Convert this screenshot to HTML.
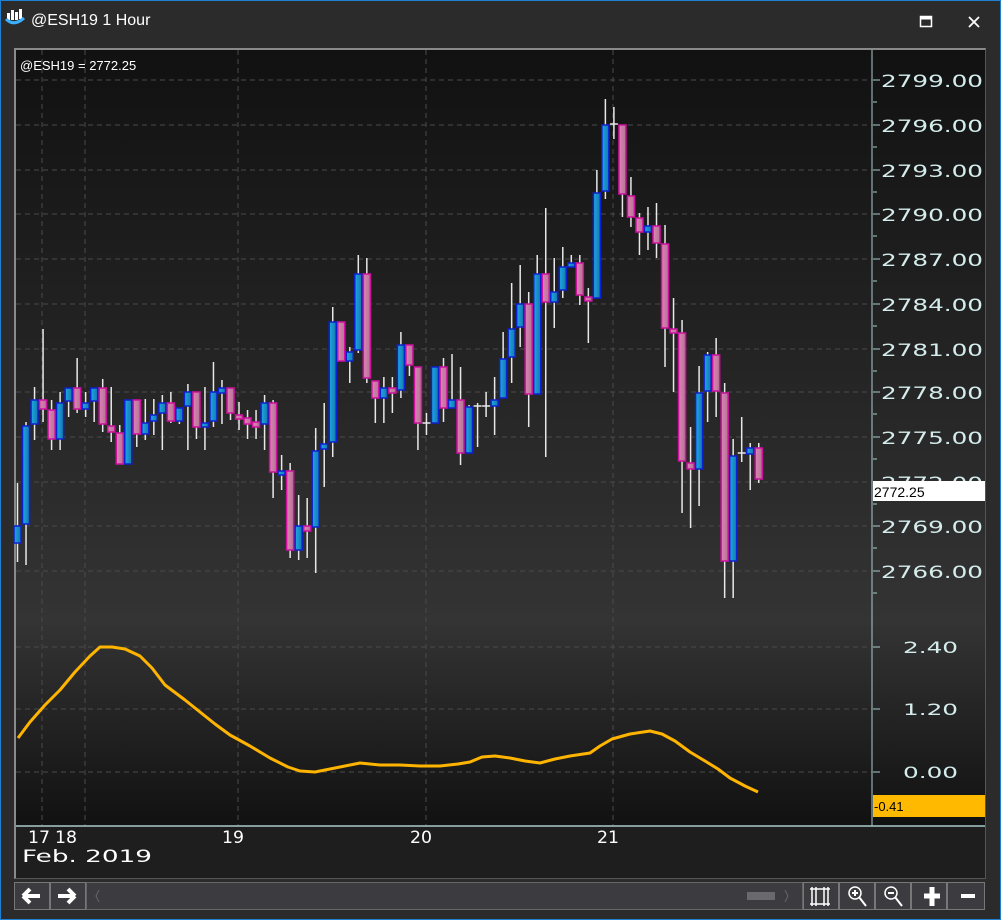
<!DOCTYPE html>
<html><head><meta charset="utf-8"><style>
*{margin:0;padding:0;box-sizing:border-box}
body{width:1001px;height:920px;background:#2b2b2b;overflow:hidden;font-family:"Liberation Sans",sans-serif;position:relative}
.win{position:absolute;left:0;top:0;width:1001px;height:920px;border:1px solid #1f7fd2;background:#2b2b2b}
.title{position:absolute;left:30px;top:11px;color:#fff;font-size:16px}
.chart{position:absolute;left:14px;top:48px;width:972px;height:831px;border:2px solid #8a8a8a;border-right:1px solid #555;border-bottom:1px solid #555}
.sb{position:absolute;top:882px;height:28px;background:#3c3c40;border:1px solid #666}
.btn{position:absolute;top:882px;height:28px;width:36px;background:#3c3c40;border:1px solid #777}
</style></head><body>
<div class="win">
<svg style="position:absolute;left:4px;top:6px" width="22" height="20" viewBox="0 0 22 20">
<rect x="2" y="6" width="3" height="7" fill="#fff"/><rect x="6" y="3" width="3" height="10" fill="#fff"/><rect x="10" y="5" width="3" height="8" fill="#fff"/><rect x="14" y="2" width="3" height="10" fill="#fff"/>
<path d="M1 12 Q9 20 19 11" stroke="#3ab0ff" stroke-width="3" fill="none"/></svg>
<div class="title">@ESH19 1 Hour</div>
<svg style="position:absolute;left:918px;top:14px" width="14" height="14"><rect x="1.5" y="1.5" width="11" height="10" fill="none" stroke="#fff" stroke-width="1.5"/><rect x="1.5" y="1.5" width="11" height="3" fill="#fff"/></svg>
<svg style="position:absolute;left:966px;top:14px" width="14" height="14"><path d="M2 2L12 12M12 2L2 12" stroke="#fff" stroke-width="1.8"/></svg>
</div>
<div class="chart"></div>
<svg id="c" style="position:absolute;left:0;top:0" width="1001" height="920"></svg>
<div class="btn" style="left:14px"></div><div class="btn" style="left:50px"></div>
<div class="sb" style="left:86px;width:717px"></div>
<div class="btn" style="left:803px"></div><div class="btn" style="left:839px"></div><div class="btn" style="left:875px"></div><div class="btn" style="left:911px"></div><div class="btn" style="left:947px;width:38px"></div>
<svg style="position:absolute;left:0;top:882px" width="1001" height="28">
<path d="M23 14H40M23 14L30 7M23 14L30 21" stroke="#fff" stroke-width="4" fill="none"/>
<path d="M58 14H75M75 14L68 7M75 14L68 21" stroke="#fff" stroke-width="4" fill="none"/>
<path d="M99 8L96 14L99 20" stroke="#666" fill="none"/>
<rect x="747" y="10" width="28" height="8" fill="#6a6a6e"/>
<path d="M785 8L788 14L785 20" stroke="#666" fill="none"/>
<path d="M812 5V24M816 5V24M824 5V24M828 5V24M810 7H830M810 22H830" stroke="#fff" stroke-width="1.5"/>
<circle cx="855" cy="11" r="6" stroke="#fff" stroke-width="1.5" fill="none"/><path d="M852 11H858M855 8V14M859 15L866 24" stroke="#fff" stroke-width="2"/>
<circle cx="891" cy="11" r="6" stroke="#fff" stroke-width="1.5" fill="none"/><path d="M888 11H894M895 15L902 24" stroke="#fff" stroke-width="2"/>
<path d="M924 14H940M932 5V24" stroke="#fff" stroke-width="5"/>
<path d="M961 14H975" stroke="#fff" stroke-width="4"/>
</svg>
<script>
var s=[];
s.push('<defs><linearGradient id="g1" x1="0" y1="0" x2="0" y2="1"><stop offset="0" stop-color="#111"/><stop offset="1" stop-color="#343434"/></linearGradient><linearGradient id="g2" x1="0" y1="0" x2="0" y2="1"><stop offset="0" stop-color="#333"/><stop offset="1" stop-color="#111"/></linearGradient><linearGradient id="bb" x1="0" x2="1"><stop offset="0" stop-color="#1aa8e8"/><stop offset="1" stop-color="#1878a8"/></linearGradient><linearGradient id="pb" x1="0" x2="1"><stop offset="0" stop-color="#e080b8"/><stop offset="1" stop-color="#b07890"/></linearGradient></defs>');
s.push('<rect x="16" y="50" width="969" height="575" fill="url(#g1)"/><rect x="16" y="625" width="969" height="201" fill="url(#g2)"/>');
s.push('<rect x="16" y="826" width="969" height="52" fill="#1e1e1e"/>');
var hs=[80,125,170,214,259,304,349,392,437,482,526,571,647,709,772];
hs.forEach(function(y){s.push('<line x1="16" x2="872" y1="'+y+'" y2="'+y+'" stroke="#4a4a4a" stroke-dasharray="5,4"/>')});
[42,85,238,426,613].forEach(function(x){s.push('<line x1="'+x+'" x2="'+x+'" y1="50" y2="826" stroke="#4a4a4a" stroke-dasharray="5,4"/>')});
s.push('<line x1="872" x2="872" y1="50" y2="826" stroke="#a8cccc"/><line x1="16" x2="985" y1="826" y2="826" stroke="#a8cccc" stroke-width="1.5"/>');
var pl=['2799.00','2796.00','2793.00','2790.00','2787.00','2784.00','2781.00','2778.00','2775.00','2772.00','2769.00','2766.00'];
pl.forEach(function(t,i){var y=hs[i];s.push('<line x1="873" x2="880" y1="'+y+'" y2="'+y+'" stroke="#a8cccc"/><line x1="873" x2="877" y1="'+(y+22)+'" y2="'+(y+22)+'" stroke="#a8cccc"/><text x="881" y="'+(y+7)+'" fill="#d4ecec" font-family="DejaVu Sans,sans-serif" font-size="17" textLength="102" lengthAdjust="spacingAndGlyphs">'+t+'</text>')});
[['2.40',647],['1.20',709],['0.00',772]].forEach(function(a){s.push('<line x1="873" x2="880" y1="'+a[1]+'" y2="'+a[1]+'" stroke="#a8cccc"/><text x="903" y="'+(a[1]+6)+'" fill="#d4ecec" font-family="DejaVu Sans,sans-serif" font-size="16" textLength="55" lengthAdjust="spacingAndGlyphs">'+a[0]+'</text>')});
var d=[[526,543,483,562,1],[426,524,422,565,1],[400,424,387,440,1],[400,409,329,422,0],[410,439,400,450,0],[403,439,392,450,1],[388,401,388,417,1],[388,409,358,413,0],[403,409,392,417,1],[388,401,388,422,1],[388,424,379,432,0],[426,432,387,442,0],[433,464,425,464,0],[400,464,400,464,1],[400,434,400,447,0],[423,434,399,440,1],[415,421,399,435,1],[403,413,395,450,1],[403,421,392,423,0],[408,421,408,424,1],[392,406,384,450,1],[392,427,392,439,0],[423,427,387,450,1],[392,421,362,427,1],[388,393,380,424,1],[388,413,388,420,0],[415,419,402,430,0],[418,424,410,439,0],[422,427,410,439,0],[403,424,395,450,1],[403,472,400,498,0],[471,475,455,490,1],[471,550,463,558,0],[526,550,495,560,1],[526,531,498,558,0],[451,527,428,573,1],[444,449,403,487,1],[322,442,307,457,1],[322,361,322,361,0],[352,361,347,383,1],[274,350,255,353,1],[274,378,258,383,0],[381,398,381,423,0],[388,398,377,423,1],[388,393,377,413,0],[345,390,332,398,1],[345,365,345,376,0],[367,423,367,450,0],[423,423,413,435,2],[367,423,367,423,1],[367,408,358,422,0],[400,408,354,408,1],[400,453,367,465,0],[407,453,405,453,1],[406,406,403,447,2],[406,406,392,417,2],[400,406,377,435,1],[359,398,332,398,1],[329,357,283,383,1],[304,327,265,347,1],[304,394,292,427,0],[274,394,255,394,1],[274,302,208,457,0],[292,302,258,328,1],[267,290,247,298,1],[263,267,255,267,1],[263,295,255,305,0],[297,301,288,343,0],[193,298,170,298,1],[125,191,99,199,1],[124,124,107,139,2],[125,194,125,217,0],[196,217,177,227,0],[218,232,213,255,0],[226,232,207,250,1],[226,243,203,258,0],[244,328,225,367,0],[329,333,298,392,0],[333,461,320,513,0],[463,469,427,528,0],[393,469,366,506,1],[355,391,352,422,1],[355,391,338,417,0],[393,561,383,598,0],[456,561,439,598,1],[453,453,417,462,2],[448,454,443,490,1],[448,479,443,483,0]];
d.forEach(function(c,i){var x=17.5+i*8.52;
s.push('<line x1="'+x+'" x2="'+x+'" y1="'+c[2]+'" y2="'+c[3]+'" stroke="#e8e8e8" stroke-width="1.5"/>');
if(c[4]==2){s.push('<line x1="'+(x-4)+'" x2="'+(x+4)+'" y1="'+c[0]+'" y2="'+c[0]+'" stroke="#e8e8e8" stroke-width="1.5"/>');return}
var h=Math.max(c[1]-c[0],3);
s.push('<rect x="'+(x-3.5)+'" y="'+c[0]+'" width="7" height="'+h+'" fill="'+(c[4]?'url(#bb)':'url(#pb)')+'" stroke="'+(c[4]?'#1020d0':'#d010a0')+'" stroke-width="1.5"/>')});
var p=[[18,738],[30,722],[45,705],[60,690],[75,672],[90,656],[100,647],[112,647],[125,649],[140,656],[152,668],[165,685],[185,700],[200,712],[215,724],[230,735],[250,746],[270,758],[288,767],[300,771],[315,772],[330,769],[345,766],[360,763],[380,765],[400,765],[420,766],[440,766],[458,764],[470,762],[482,757],[495,756],[510,758],[525,761],[540,763],[555,759],[570,756],[590,753],[600,746],[612,739],[630,734],[650,731],[662,734],[675,741],[690,752],[705,761],[718,769],[730,778],[745,786],[758,792]];
s.push('<polyline points="'+p.join(' ')+'" fill="none" stroke="#ffb400" stroke-width="3" stroke-linejoin="round"/>');
s.push('<rect x="873" y="481" width="112" height="20" fill="#fff"/><text x="874" y="497" font-size="14" fill="#000">2772.25</text>');
s.push('<rect x="873" y="795" width="112" height="22" fill="#ffba00"/><text x="874" y="811" font-size="13" fill="#000">-0.41</text>');
s.push('<text x="20" y="70" font-size="13" fill="#fff">@ESH19 = 2772.25</text>');
[['17',28],['18',55],['19',222],['20',410],['21',597]].forEach(function(a){s.push('<text x="'+a[1]+'" y="843" font-size="17" fill="#fff" font-family="DejaVu Sans,sans-serif" textLength="22" lengthAdjust="spacingAndGlyphs">'+a[0]+'</text>')});
s.push('<text x="22" y="862" font-size="17" fill="#fff" font-family="DejaVu Sans,sans-serif" textLength="130" lengthAdjust="spacingAndGlyphs">Feb. 2019</text>');
document.getElementById('c').innerHTML=s.join('');
</script>
</body></html>
